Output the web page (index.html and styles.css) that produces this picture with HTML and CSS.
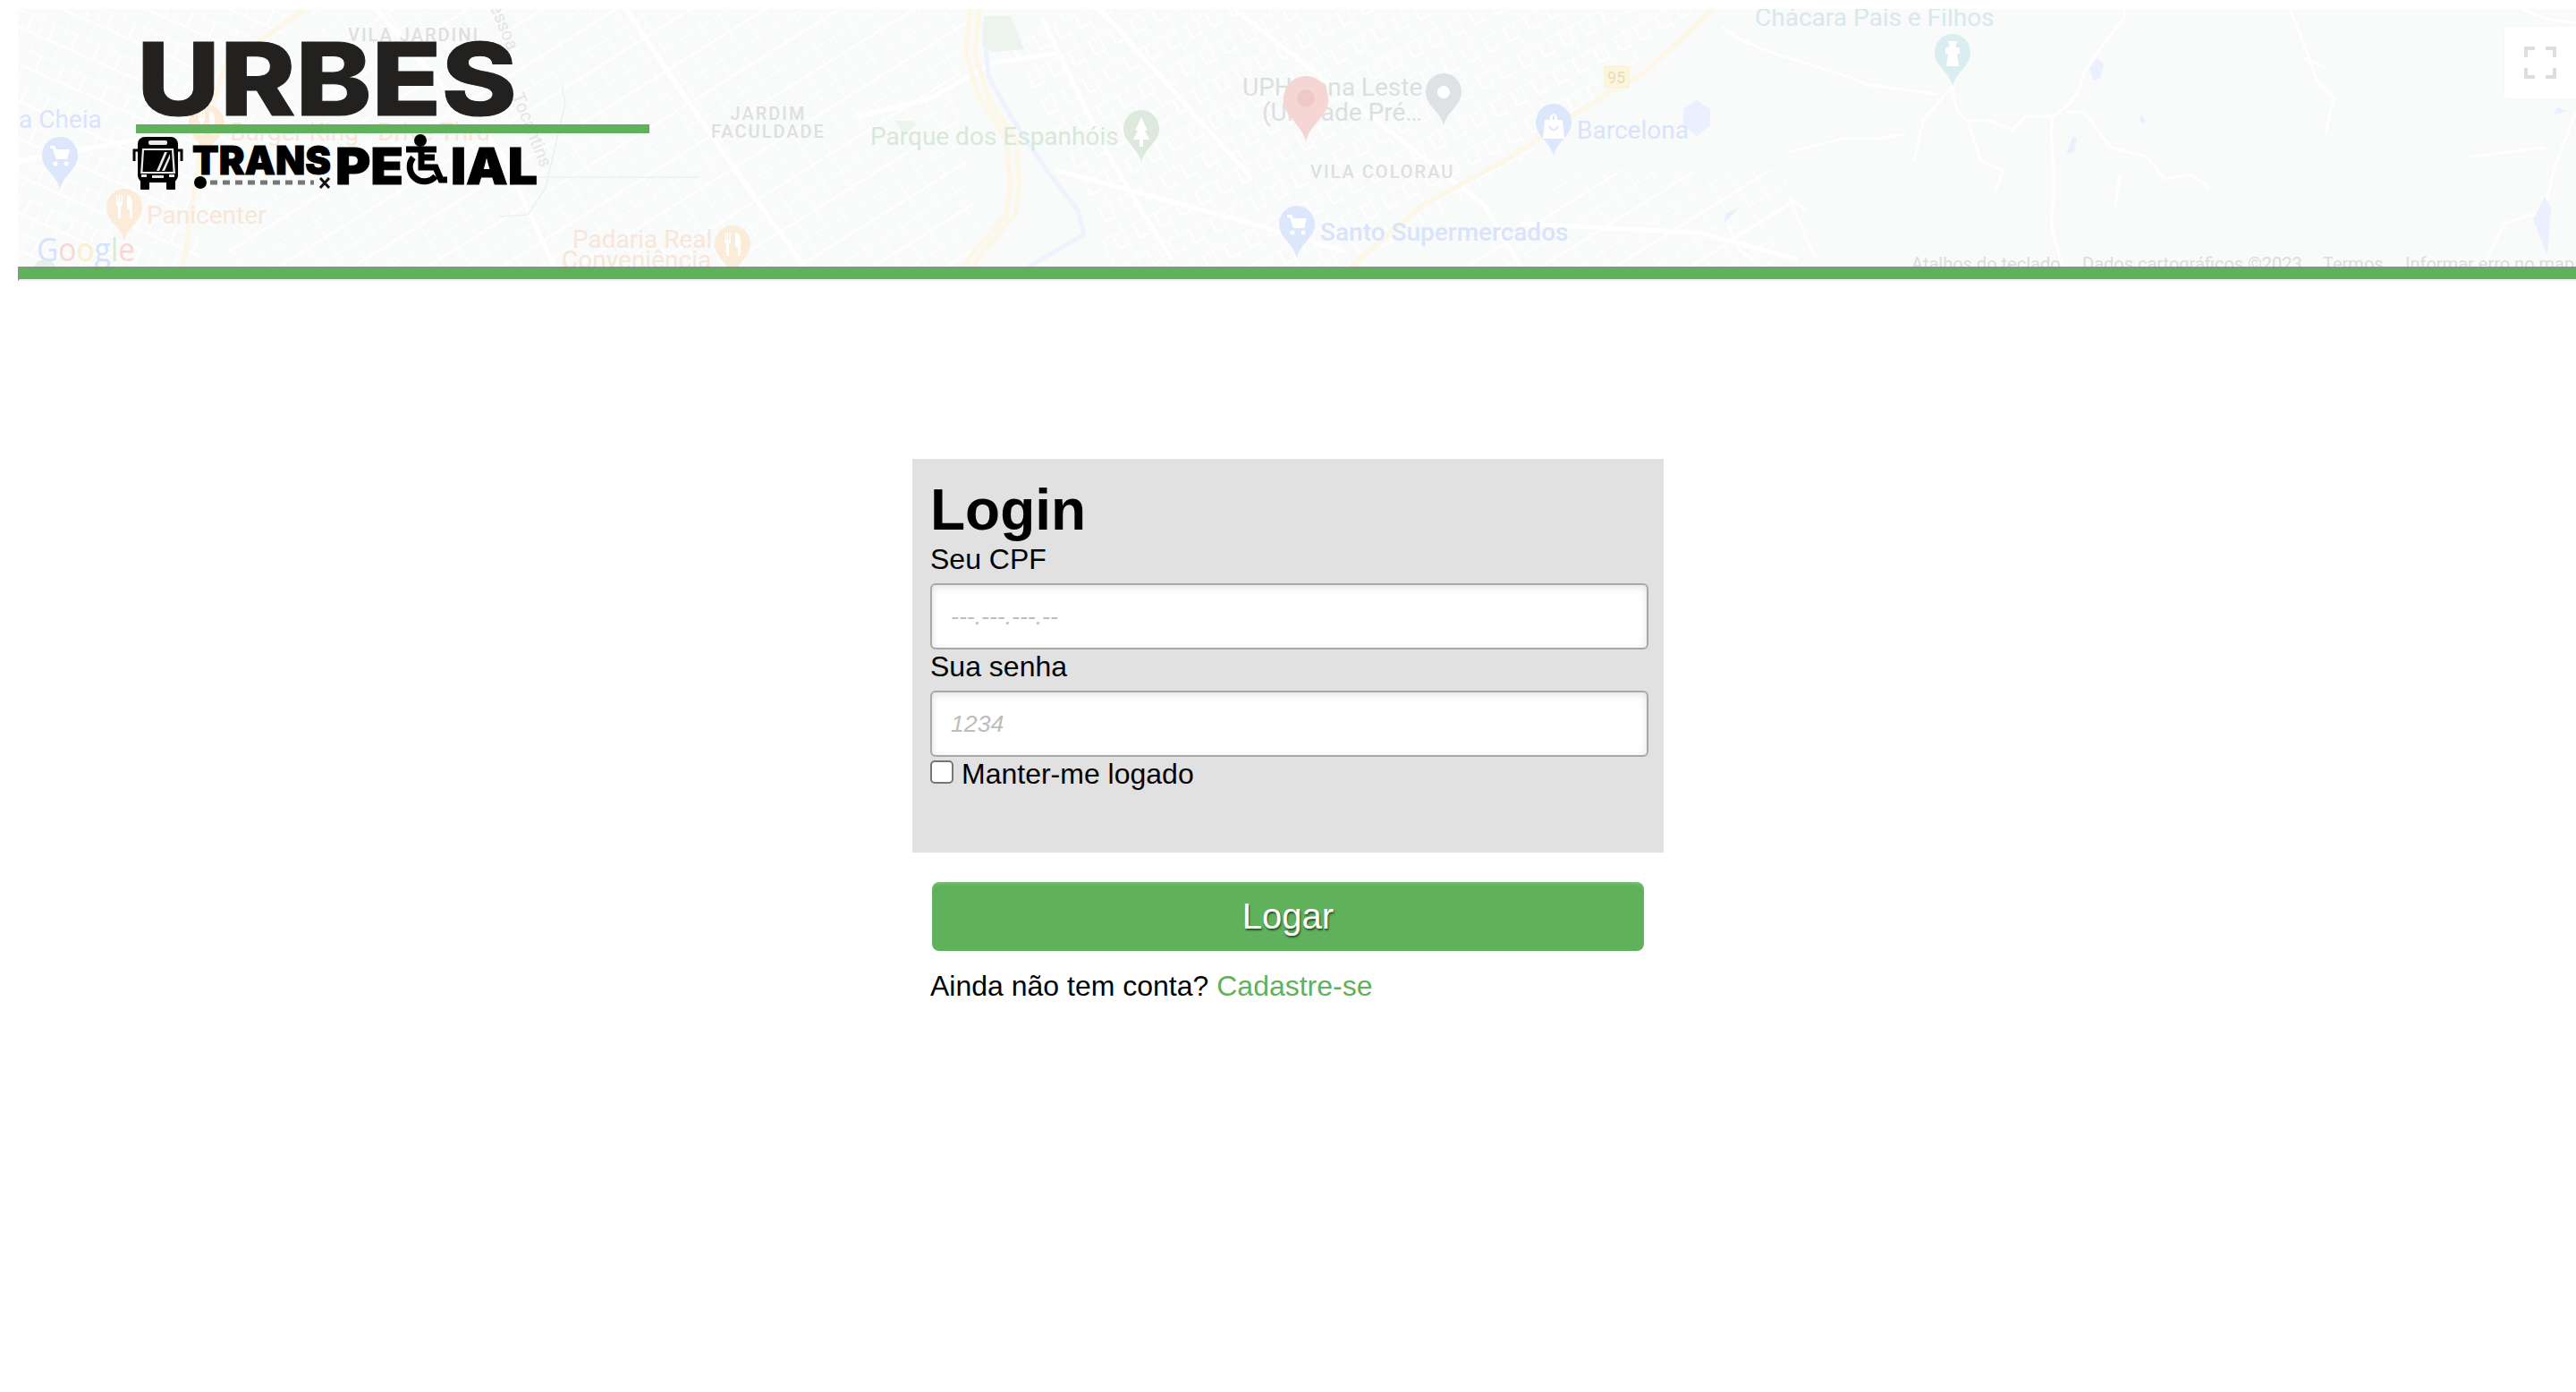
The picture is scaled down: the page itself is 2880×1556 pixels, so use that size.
FILE: index.html
```html
<!DOCTYPE html>
<html lang="pt-BR">

<head>
    <meta charset="UTF-8">
    <meta name="viewport" content="width=device-width, initial-scale=1.0">
    <title>Urbes TransPecial - Login</title>
    <link rel="stylesheet" href="styles.css">
</head>

<body>
    <header id="site-header">
        <div id="map">
            <!-- map coordinates are page pixels, hence the viewBox offset -->
            <svg class="map-canvas" viewBox="20 10 2860 288" width="2860" height="288">
                <defs>
                    <symbol id="pin" viewBox="0 0 40 58">
                        <path d="M20 0C31 0 40 9 40 21C40 36 24 42 20 58C16 42 0 36 0 21C0 9 9 0 20 0Z" />
                    </symbol>
                    <g id="cart">
                        <path d="M-11 -12h5l2 4h15l-3 11h-12l-4 -12h-3z" />
                        <circle cx="-5" cy="8" r="2.5" />
                        <circle cx="7" cy="8" r="2.5" />
                    </g>
                    <g id="fork">
                        <path d="M-9 -12v9q0 3 2 4v13h3v-13q2 -1 2 -4v-9h-1.500v8h-1.500v-8h-1.500v8h-1.500v-8z" />
                        <path d="M3 -12q6 1 6 10v16h-3v-10h-3z" />
                    </g>
                    <pattern id="streets-a" width="27" height="38" patternUnits="userSpaceOnUse" patternTransform="rotate(24)">
                        <path class="street" d="M0 0H27M0 19H27M0 0V38M14 0V19" />
                    </pattern>
                    <pattern id="streets-b" width="24" height="44" patternUnits="userSpaceOnUse" patternTransform="rotate(-32)">
                        <path class="street" d="M0 0H24M0 22H24M0 0V44" />
                    </pattern>
                    <pattern id="streets-c" width="34" height="26" patternUnits="userSpaceOnUse" patternTransform="rotate(62)">
                        <path class="street" d="M0 0H34M0 13H17M0 0V26M17 0V13" />
                    </pattern>
                </defs>

                <rect class="land" x="20" y="10" width="2860" height="288" />

                <!-- street blocks -->
                <path fill="url(#streets-a)" d="M20 10H330L220 298H20Z" />
                <path fill="url(#streets-b)" d="M350 10H1080L1070 120L1100 298H250Z" />
                <path fill="url(#streets-c)" d="M1180 10H1900L1700 180L1520 298H1240L1210 200L1130 60Z" />
                <path fill="url(#streets-b)" d="M1760 190H2010L1980 298H1640Z" />

                <!-- main avenues -->
                <g class="avenue">
                    <path d="M1165 20L1240 175L1310 290" />
                    <path d="M1230 10L1400 200" />
                    <path d="M1380 10L1660 230L1700 298" />
                    <path d="M960 130L1040 110L1110 70L1180 60" />
                    <path d="M700 10L760 100L850 230L900 298" />
                    <path d="M420 10L560 170L620 298" />
                    <path d="M20 180L240 140L500 210" />
                    <path d="M1700 250L1900 260L2010 290" />
                    <path d="M1180 190L1400 250L1500 280" />
                </g>

                <!-- rural roads on the right -->
                <g class="road">
                    <path d="M1925 30C1960 60 2030 70 2090 95L2165 105" />
                    <path d="M2183 96C2185 120 2190 130 2200 135H2225L2250 145L2265 130H2295L2310 120L2325 100L2330 80L2355 45L2375 20L2375 10" />
                    <path d="M2295 130C2290 160 2300 190 2295 230C2290 260 2300 270 2305 298" />
                    <path d="M2310 125H2330L2360 165L2400 175L2420 200L2450 195L2470 210" />
                    <path d="M2370 195L2365 230" />
                    <path d="M2183 96L2150 135L2140 180" />
                    <path d="M2200 135L2215 180L2240 190L2230 215" />
                    <path d="M2000 170L2060 155L2100 155L2130 150" />
                    <path d="M2560 10L2580 60L2590 90L2610 110L2605 125L2600 150" />
                    <path d="M2600 75L2575 65" />
                    <path d="M2880 125L2855 190L2845 235L2800 250L2770 310" />
                    <path d="M2760 175L2845 165" />
                    <path d="M2880 25C2860 25 2840 20 2820 10" />
                    <path d="M1930 270L1965 250L2005 225L2020 235" />
                    <path d="M2000 220L2030 290" />
                    <path d="M1932 250L1945 280L1960 290" />
                </g>

                <!-- highways -->
                <g class="highway">
                    <path d="M340 10L250 75L225 160L205 298" />
                    <path d="M1085 10L1080 60L1095 110L1125 155L1130 205L1125 240L1090 280L1078 298" />
                    <path d="M1095 10L1090 60L1105 110L1135 155L1140 205L1135 240L1100 280L1088 298" />
                    <path d="M1915 10L1840 80L1756 130L1690 175L1590 230L1510 298" />
                </g>
                <path class="river" d="M1100 25L1105 85L1130 130L1170 190L1205 235L1212 262L1190 275L1150 298" />
                <path class="park" d="M1100 18H1130L1145 55L1110 58L1098 50Z" />
                <path class="park" d="M1000 135H1020L1025 140L1010 150Z" />
                <path class="park-line" d="M628 95L632 115L610 210L590 240L558 242" />
                <path class="park-line" d="M600 198H780" />

                <!-- lakes -->
                <g class="water">
                    <path d="M1897 112L1912 122L1912 140L1897 152L1882 140L1882 122Z" />
                    <path d="M2344 65L2352 72L2348 88L2340 90L2336 76Z" />
                    <path d="M2394 128L2399 135L2396 138L2392 134Z" />
                    <path d="M2318 152L2322 155L2319 170L2310 172Z" />
                    <path d="M1945 232L1927 250L1930 238Z" />
                    <path d="M2845 220L2852 232L2848 285L2832 245Z" />
                    <path d="M2860 120L2870 124L2855 128Z" />
                </g>
                <circle class="google-blob" cx="50" cy="303" r="13" />

                <!-- pins -->
                <use class="pin-blue" href="#pin" x="47" y="153" width="40" height="58" />
                <use class="pin-orange" href="#pin" x="119" y="211" width="40" height="58" />
                <use class="pin-orange" href="#pin" x="211" y="117" width="40" height="58" />
                <use class="pin-orange" href="#pin" x="799" y="252" width="40" height="58" />
                <use class="pin-green" href="#pin" x="1256" y="123" width="40" height="58" />
                <use class="pin-grey" href="#pin" x="1594" y="82" width="40" height="58" />
                <use class="pin-blue" href="#pin" x="1717" y="116" width="40" height="58" />
                <use class="pin-blue" href="#pin" x="1430" y="230" width="40" height="58" />
                <use class="pin-teal" href="#pin" x="2163" y="38" width="40" height="58" />

                <g class="glyph">
                    <use href="#cart" x="67" y="175" />
                    <use href="#cart" x="1450" y="252" />
                    <use href="#fork" x="139" y="230" />
                    <use href="#fork" x="231" y="136" />
                    <use href="#fork" x="819" y="272" />
                    <path d="M1276 131L1283 146H1280L1285 156H1278V164H1274V156H1267L1272 146H1269Z" />
                    <circle cx="1614" cy="103" r="7" />
                    <path d="M1727 134H1747L1749 155H1725ZM1733 134V130Q1737 124 1741 130V134H1738V130Q1737 128 1736 130V134Z" />
                    <path d="M2178 46H2188L2186 52L2191 54V60H2188L2190 74H2176L2178 60H2175V54L2180 52Z" />
                </g>
                <path class="bag-smile" d="M1732 141Q1737 150 1742 141" />

                <!-- place names -->
                <text class="map-label blue" x="21" y="143">a Cheia</text>
                <text class="map-label orange" x="257" y="157" textLength="291">Burger King - Drive Thru</text>
                <text class="map-label orange" x="164" y="250">Panicenter</text>
                <text class="map-label orange" x="640" y="277">Padaria Real</text>
                <text class="map-label orange" x="628" y="300">Conveniência</text>
                <text class="map-area" x="389" y="46">VILA JARDINI</text>
                <text class="map-area centered" x="859" y="134">JARDIM</text>
                <text class="map-area centered" x="859" y="154">FACULDADE</text>
                <text class="map-area" x="1465" y="199">VILA COLORAU</text>
                <text class="map-label green" x="973" y="162">Parque dos Espanhóis</text>
                <text class="map-label grey" x="1389" y="107">UPH Zona Leste</text>
                <text class="map-label grey" x="1411" y="135">(Unidade Pré…</text>
                <text class="map-label blue" x="1763" y="155">Barcelona</text>
                <text class="map-label blue bold" x="1476" y="269">Santo Supermercados</text>
                <text class="map-label teal" x="1962" y="29">Chácara Pais e Filhos</text>
                <text class="map-street" transform="translate(543 -4) rotate(68)">Pessoa</text>
                <text class="map-street" transform="translate(572 107) rotate(68)">Tocantins</text>

                <!-- the selected place, over the labels -->
                <use class="pin-red" href="#pin" x="1434" y="85" width="52" height="73" />
                <circle class="pin-red-dot" cx="1460" cy="110" r="10" />

                <!-- road number -->
                <rect class="shield" x="1794" y="74" width="27" height="24" />
                <text class="shield-text" x="1807" y="93">95</text>

                <!-- attribution -->
                <text class="map-google" x="41" y="292" textLength="110" lengthAdjust="spacingAndGlyphs"><tspan class="g-blue">G</tspan><tspan class="g-red">o</tspan><tspan class="g-yellow">o</tspan><tspan class="g-blue">g</tspan><tspan class="g-green">l</tspan><tspan class="g-red">e</tspan></text>
                <text class="map-credit" x="2137" y="302">Atalhos do teclado</text>
                <text class="map-credit" x="2328" y="302">Dados cartográficos ©2023</text>
                <text class="map-credit" x="2597" y="302">Termos</text>
                <text class="map-credit" x="2689" y="302">Informar erro no mapa</text>
            </svg>

            <button id="map-fullscreen" type="button" aria-label="Tela inteira">
                <svg viewBox="0 0 36 36" width="36" height="36">
                    <path d="M0 0H12V4H4V12H0ZM24 0H36V12H32V4H24ZM0 24H4V32H12V36H0ZM32 24H36V36H24V32H32Z" />
                </svg>
            </button>

            <!-- logo -->
            <svg class="logo" viewBox="140 40 600 180" width="600" height="180">
                <text class="logo-urbes" x="153" y="129" textLength="425" lengthAdjust="spacingAndGlyphs">URBES</text>
                <rect class="logo-line" x="152" y="139" width="574" height="10" />

                <!-- bus -->
                <g class="logo-bus">
                    <rect x="154" y="153" width="45" height="51" rx="8" />
                    <rect x="157" y="200" width="10" height="12" rx="1" />
                    <rect x="186" y="200" width="10" height="12" rx="1" />
                    <path class="logo-bus-mirror" d="M155 168H150V180M198 168H203V180" />
                    <rect class="logo-bus-light" x="166" y="157" width="21" height="5" rx="2" />
                    <path class="logo-bus-light" d="M159 166H194L196 194H157ZM161 168L159.500 192H193.500L192 168Z" fill-rule="evenodd" />
                    <path class="logo-bus-light" d="M175 191L184 170H187L178 191ZM181 191L190 172V177L184 191Z" />
                    <rect class="logo-bus-light" x="158" y="195" width="6" height="3" />
                    <rect class="logo-bus-light" x="189" y="195" width="6" height="3" />
                    <rect class="logo-bus-light" x="170" y="196" width="13" height="3" />
                </g>

                <text class="logo-trans" x="215" y="195" textLength="155" lengthAdjust="spacingAndGlyphs">TRANS</text>
                <circle cx="224" cy="204" r="7" />
                <path class="logo-dashes" d="M235 204H351" />
                <path class="logo-x" d="M358 199L368 210M368 199L358 210" />

                <text class="logo-special" x="375" y="206" textLength="76" lengthAdjust="spacingAndGlyphs">PE</text>

                <!-- wheelchair in place of the C -->
                <circle cx="470" cy="157" r="7" />
                <g class="logo-chair">
                    <path d="M471 166V187H487L493 201H500" />
                    <path d="M471 176H486" />
                    <path d="M462 176A15.500 15.500 0 1 0 487 197" />
                    <path d="M454 167H488" />
                </g>

                <text class="logo-special" x="504" y="206" textLength="97" lengthAdjust="spacingAndGlyphs">IAL</text>
            </svg>
        </div>
        <hr class="divider">
    </header>

    <main id="login-container">
        <form id="login-form">
            <h1 id="form-heading">Login</h1>
            <label class="field-label" for="cpf">Seu CPF</label>
            <input class="field-input" type="text" id="cpf" name="cpf" placeholder="---.---.---.--">
            <label class="field-label" for="senha">Sua senha</label>
            <input class="field-input" type="password" id="senha" name="senha" placeholder="1234">
            <label class="keep-logged" for="manter">
                <input type="checkbox" id="manter" name="manter">
                Manter-me logado
            </label>
        </form>
        <button id="submitLogin" type="button">Logar</button>
        <p id="signup-text">Ainda não tem conta? <a href="#">Cadastre-se</a></p>
    </main>
</body>

</html>
```

FILE: styles.css
```css
body {
    font-family: "Liberation Sans", Arial, sans-serif;
    background-color: #fff;
    color: #000;
    margin: 0;
    overflow: hidden;
}

#site-header {
    margin: 10px 0 0 20px;
}

#map {
    position: relative;
    height: 288px;
    overflow: hidden;
}

.map-canvas {
    display: block;
}

.land {
    fill: #f9fafa;
}

.street {
    fill: none;
    stroke: #fff;
    stroke-width: 2;
}

.avenue {
    fill: none;
    stroke: #fff;
    stroke-width: 5;
}

.road {
    fill: none;
    stroke: #fff;
    stroke-width: 3;
}

.highway {
    fill: none;
    stroke: #fdf7ea;
    stroke-width: 6;
}

.river {
    fill: none;
    stroke: #eef3fd;
    stroke-width: 5;
}

.park {
    fill: #edf4ee;
}

.park-line {
    fill: none;
    stroke: #eaf2ea;
    stroke-width: 1.5;
}

.water {
    fill: #eaf0fd;
}

.google-blob {
    fill: #e4f1e6;
}

.pin-blue {
    fill: #dde7fc;
}

.pin-orange {
    fill: #fbecd9;
}

.pin-green {
    fill: #dce9dc;
}

.pin-grey {
    fill: #dfe2e5;
}

.pin-teal {
    fill: #dcedf1;
}

.pin-red {
    fill: #f6d6d4;
}

.pin-red-dot {
    fill: #efc9c7;
}

.glyph {
    fill: #fff;
}

.bag-smile {
    fill: none;
    stroke: #dde7fc;
    stroke-width: 2;
}

.map-label {
    font-family: Roboto, sans-serif;
    font-size: 28px;
}

.map-label.bold {
    font-weight: 500;
}

.map-label.blue {
    fill: #d9e4fb;
}

.map-label.orange {
    fill: #f8e6d8;
}

.map-label.green {
    fill: #d8e8d9;
}

.map-label.grey {
    fill: #dcdfe2;
}

.map-label.teal {
    fill: #d8e8ec;
}

.map-area {
    font-family: Roboto, sans-serif;
    font-size: 20px;
    font-weight: 500;
    letter-spacing: 2px;
    fill: #dedfe0;
}

.map-area.centered {
    text-anchor: middle;
}

.map-street {
    font-family: Roboto, sans-serif;
    font-size: 20px;
    fill: #e4e5e6;
}

.shield {
    fill: #fdf6dc;
    stroke: #faf0cf;
}

.shield-text {
    font-family: Roboto, sans-serif;
    font-size: 18px;
    text-anchor: middle;
    fill: #e6dcb9;
}

.map-google {
    font-family: "Open Sans", sans-serif;
    font-size: 36px;
}

.g-blue {
    fill: #d7e3fb;
}

.g-red {
    fill: #f8d8d5;
}

.g-yellow {
    fill: #fcefc8;
}

.g-green {
    fill: #d6ecdc;
}

.map-credit {
    font-family: Roboto, sans-serif;
    font-size: 20px;
    fill: #dcdcdc;
}

#map-fullscreen {
    position: absolute;
    top: 20px;
    right: 0;
    width: 80px;
    height: 80px;
    padding: 0;
    border: none;
    border-radius: 4px 0 0 4px;
    background-color: #fff;
    display: flex;
    align-items: center;
    justify-content: center;
    box-shadow: 0 1px 4px rgba(0, 0, 0, 0.03);
}

#map-fullscreen path {
    fill: #dedede;
}

.logo {
    position: absolute;
    top: 30px;
    left: 120px;
    overflow: visible;
}

.logo-urbes {
    font-family: Inter, "Liberation Sans", sans-serif;
    font-size: 113px;
    font-weight: 800;
    fill: #222120;
    stroke: #222120;
    stroke-width: 1;
}

.logo-line {
    fill: #5fb15b;
}

.logo-bus-mirror {
    fill: none;
    stroke: #000;
    stroke-width: 3;
}

.logo-bus-light {
    fill: #e9e9e9;
}

.logo-trans {
    font-family: Inter, "Liberation Sans", sans-serif;
    font-size: 44px;
    font-weight: 900;
    stroke: #000;
    stroke-width: 1;
}

.logo-special {
    font-family: Inter, "Liberation Sans", sans-serif;
    font-size: 57px;
    font-weight: 900;
    stroke: #000;
    stroke-width: 1;
}

.logo-dashes {
    fill: none;
    stroke: #777;
    stroke-width: 5;
    stroke-dasharray: 8 6;
}

.logo-x {
    fill: none;
    stroke: #111;
    stroke-width: 3;
}

.logo-chair {
    fill: none;
    stroke: #000;
    stroke-width: 7;
}

.divider {
    box-sizing: content-box;
    height: 12px;
    margin: 0 -4px 0 0;
    border-style: solid;
    border-width: 2px;
    border-color: #8e8e8e #eee #eee #8e8e8e;
    background-color: #5fb15b;
}

#login-container {
    width: 840px;
    margin: 199px auto 0;
}

#login-form {
    box-sizing: border-box;
    height: 440px;
    padding: 21px 17px 0 20px;
    background-color: #e1e1e1;
}

#form-heading {
    margin: 0;
    font-size: 64px;
    line-height: 72px;
}

.field-label {
    display: block;
    font-size: 32px;
    line-height: 39px;
}

.field-input {
    display: block;
    box-sizing: border-box;
    width: 100%;
    height: 74px;
    margin: 7px 0 0;
    padding: 0 21px;
    font-family: "Liberation Sans", Arial, sans-serif;
    font-size: 26.67px;
    background-color: #fff;
    border: 2px solid #a8a8a8;
    border-radius: 6px;
    box-shadow: inset 0 2px 8px rgba(0, 0, 0, 0.12);
}

.field-input::placeholder {
    color: #bdbdbd;
    font-style: italic;
}

.keep-logged {
    display: flex;
    gap: 9px;
    font-size: 32px;
    line-height: 39px;
}

.keep-logged input {
    appearance: none;
    box-sizing: border-box;
    width: 26px;
    height: 26px;
    margin: 4px 0 0;
    background-color: #fff;
    border: 2px solid #767676;
    border-radius: 5px;
}

#submitLogin {
    display: block;
    width: 796px;
    height: 77px;
    margin: 33px 0 0 22px;
    padding: 0;
    font-family: "Liberation Sans", Arial, sans-serif;
    font-size: 40px;
    color: #fff;
    text-shadow: 1px 2px 2px rgba(0, 0, 0, 0.55);
    background-color: #5fb15b;
    border: none;
    border-radius: 8px;
    box-shadow: inset 0 3px 2px rgba(255, 255, 255, 0.12);
    cursor: pointer;
}

#signup-text {
    margin: 20px 0 0 20px;
    font-size: 32px;
    line-height: 39px;
}

#signup-text a {
    color: #5fb15b;
    text-decoration: none;
}
```
